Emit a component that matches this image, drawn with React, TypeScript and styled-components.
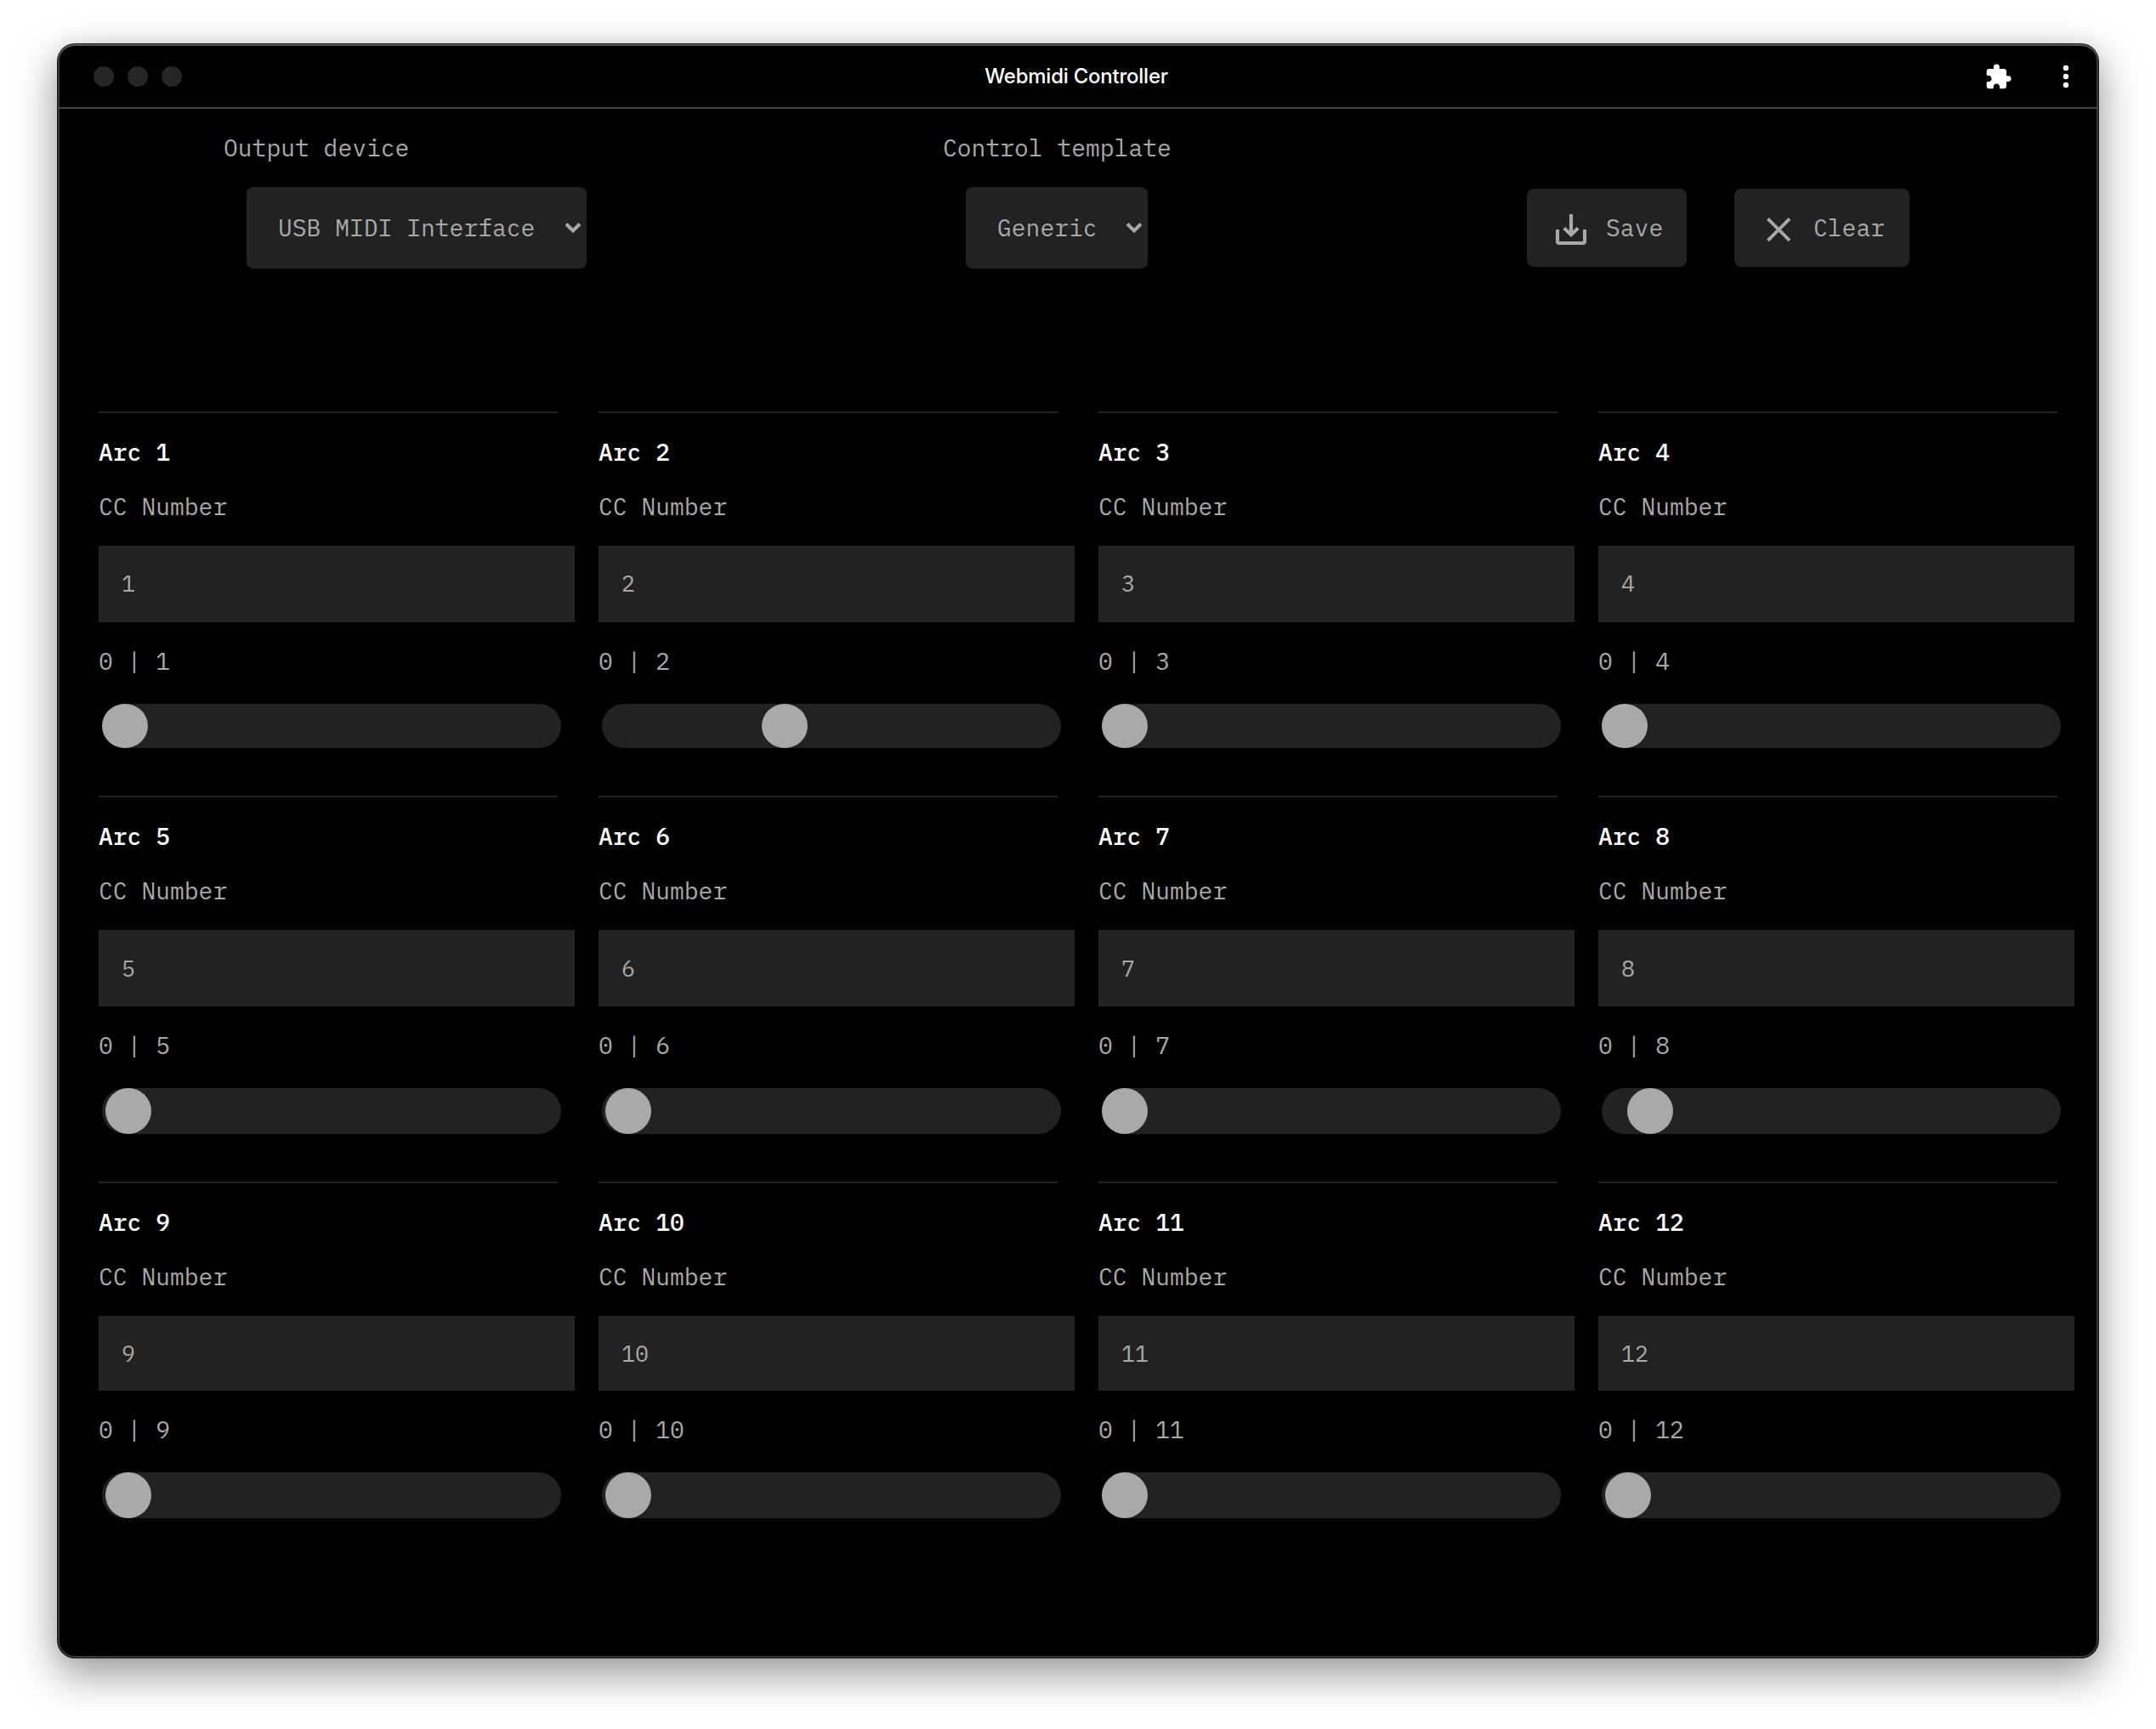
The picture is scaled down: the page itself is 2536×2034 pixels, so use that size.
import React from 'react';
import styled, { createGlobalStyle } from 'styled-components';

const GlobalStyle = createGlobalStyle`
  html, body { margin: 0; background: #fff; }
  * { box-sizing: border-box; }
`;

const Desktop = styled.div`
  width: 2536px;
  height: 2034px;
  padding: 52px 68px 84px;
  overflow: hidden;
  background: #fff;
`;

const Window = styled.main`
  width: 2400px;
  height: 1898px;
  display: flex;
  flex-direction: column;
  border-radius: 20px;
  overflow: hidden;
  background: #000;
  color: #a9a9a9;
  font: 28px/40px 'IBM Plex Mono', 'Liberation Mono', monospace;
  box-shadow: inset 0 2px 0 #555, inset 0 0 0 2px #363636, 0 0 0 1px #1c1c1c,
    0 18px 50px 2px rgba(0, 0, 0, 0.4), 0 0 24px rgba(0, 0, 0, 0.06);
`;

const TitleBar = styled.header`
  height: 76px;
  flex: none;
  display: grid;
  grid-template-columns: 1fr auto 1fr;
  align-items: center;
  padding: 2px 34px 0 42px;
  border-bottom: 2px solid #444;
`;

const Lights = styled.div`
  display: flex;
  gap: 16px;
`;

const Light = styled.span`
  width: 24px;
  height: 24px;
  border-radius: 50%;
  background: #262626;
`;

const Title = styled.h1`
  margin: 0 12px 0 0;
  font: 500 24px/30px Inter, 'Liberation Sans', sans-serif;
  letter-spacing: -0.24px;
  color: #fff;
`;

const TitleActions = styled.div`
  display: flex;
  justify-content: flex-end;
  align-items: center;
  gap: 59px;
`;

const Toolbar = styled.section`
  height: 356px;
  flex: none;
  display: flex;
  padding: 26px 0 0 194px;
`;

const Field = styled.div<{ $width: number }>`
  width: ${(p) => p.$width}px;
`;

const Label = styled.div`
  height: 40px;
`;

const FieldLabel = styled(Label)`
  padding-left: 1px;
`;

const Select = styled.div<{ $width: number }>`
  width: ${(p) => p.$width}px;
  height: 96px;
  margin: 26px 0 0 28px;
  padding: 0 6px 0 37px;
  display: flex;
  align-items: center;
  justify-content: space-between;
  border-radius: 8px;
  background: #222;
`;

const Buttons = styled.div`
  display: flex;
  gap: 56px;
  padding-top: 68px;
`;

const Button = styled.button<{ $width: number }>`
  width: ${(p) => p.$width}px;
  height: 92px;
  padding: 0 0 0 28px;
  border: 0;
  border-radius: 8px;
  display: flex;
  align-items: center;
  gap: 17px;
  background: #222;
  color: inherit;
  font: inherit;
`;

const Grid = styled.section`
  display: grid;
  grid-template-columns: repeat(4, 540px);
  grid-template-rows: 452px 454px 452px;
  column-gap: 48px;
  padding-left: 48px;
`;

const Card = styled.article`
  border-top: 2px solid #222;
  padding-top: 26px;
`;

const CardTitle = styled.h2`
  margin: 0 0 24px;
  font: 500 28px/40px 'IBM Plex Mono', 'Liberation Mono', monospace;
  color: #fff;
`;

const NumberBox = styled.div<{ $height: number; $lift: number }>`
  width: 560px;
  height: ${(p) => p.$height}px;
  margin: 26px 0;
  padding: 0 0 ${(p) => p.$lift}px 27px;
  display: flex;
  align-items: center;
  background: #222;
  font-size: 26.67px;
`;

const Track = styled.div<{ $height: number }>`
  width: 540px;
  height: ${(p) => p.$height}px;
  margin: 30px 0 0 4px;
  border-radius: 27px;
  background: #222;
`;

const Thumb = styled.div`
  width: 54px;
  height: 100%;
  border-radius: 50%;
  background: #a9a9a9;
`;

const Puzzle = () => (
  <svg width="33" height="33" viewBox="0 0 24 24" fill="#fff">
    <path d="M20.5 11H19V7c0-1.1-.9-2-2-2h-4V3.500a2.500 2.500 0 0 0-5 0V5H4c-1.100 0-1.990.9-1.990 2v3.800H3.500c1.490 0 2.700 1.210 2.700 2.700s-1.210 2.700-2.700 2.700H2V20c0 1.100.9 2 2 2h3.800v-1.500c0-1.490 1.210-2.700 2.700-2.700s2.700 1.210 2.700 2.700V22H17c1.100 0 2-.9 2-2v-4h1.500a2.500 2.500 0 0 0 0-5z" />
  </svg>
);

const Dots = () => (
  <svg width="8" height="28" viewBox="0 0 8 28" fill="#fff">
    <circle cx="4" cy="4" r="3.200" />
    <circle cx="4" cy="14" r="3.200" />
    <circle cx="4" cy="24" r="3.200" />
  </svg>
);

const Chevron = () => (
  <svg width="20" height="14" viewBox="0 0 20 14" fill="none" stroke="#a9a9a9" strokeWidth="4">
    <path d="M2 2.500 10 10.500 18 2.500" />
  </svg>
);

const SaveIcon = () => (
  <svg width="48" height="48" viewBox="0 0 48 48" fill="none" stroke="#a9a9a9" strokeWidth="4.100">
    <path d="M8 26v14q0 2 2 2h28q2 0 2-2V26M24 8v24M15.800 24.200l8.200 8 8.200-8" />
  </svg>
);

const ClearIcon = () => (
  <svg width="48" height="48" viewBox="0 0 48 48" fill="none" stroke="#a9a9a9" strokeWidth="3.800">
    <path d="M11.500 13.300 37 38.800M37 13.300 11.500 38.800" />
  </svg>
);

const offsets = [0, 188, 0, 0, 4, 4, 0, 30, 4, 4, 0, 4];

export default function App() {
  return (
    <>
      <GlobalStyle />
      <Desktop>
        <Window>
          <TitleBar>
            <Lights><Light /><Light /><Light /></Lights>
            <Title>Webmidi Controller</Title>
            <TitleActions><Puzzle /><Dots /></TitleActions>
          </TitleBar>
          <Toolbar>
            <Field $width={846}>
              <FieldLabel>Output device</FieldLabel>
              <Select $width={400}>USB MIDI Interface<Chevron /></Select>
            </Field>
            <Field $width={688}>
              <FieldLabel>Control template</FieldLabel>
              <Select $width={214}>Generic<Chevron /></Select>
            </Field>
            <Buttons>
              <Button $width={188}><SaveIcon />Save</Button>
              <Button $width={206}><ClearIcon />Clear</Button>
            </Buttons>
          </Toolbar>
          <Grid>
            {offsets.map((offset, i) => (
              <Card key={i}>
                <CardTitle>Arc {i + 1}</CardTitle>
                <Label>CC Number</Label>
                <NumberBox $height={i < 8 ? 90 : 88} $lift={i < 4 ? 2 : 0}>{i + 1}</NumberBox>
                <Label>0 | {i + 1}</Label>
                <Track $height={i < 4 ? 52 : 54}><Thumb style={{ marginLeft: offset }} /></Track>
              </Card>
            ))}
          </Grid>
        </Window>
      </Desktop>
    </>
  );
}
